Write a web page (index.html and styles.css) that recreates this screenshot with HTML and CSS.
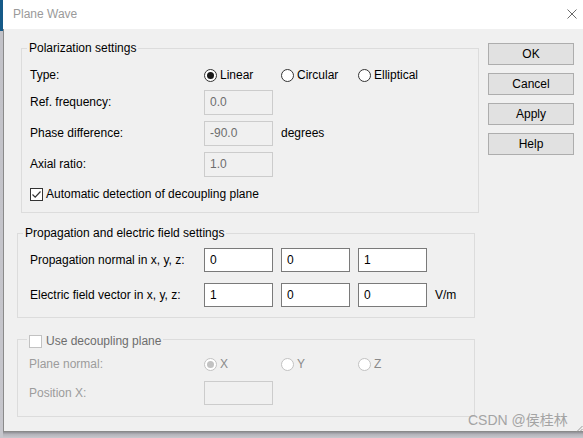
FILE: index.html
```html
<!DOCTYPE html>
<html>
<head>
<meta charset="utf-8">
<link rel="stylesheet" href="styles.css">
</head>
<body>
<div class="screen">
  <div class="desk-edge"></div>
  <div class="window">
    <div class="titlebar">
      <span class="title">Plane Wave</span>
      <svg class="close" width="10" height="10" viewBox="0 0 10 10"><path d="M0.5 0.5 L9.5 9.5 M9.5 0.5 L0.5 9.5" stroke="#6a6a6a" stroke-width="1" fill="none"/></svg>
    </div>
    <div class="client">
      <div class="groups">
        <section class="group g1">
          <div class="legend">Polarization settings</div>
          <div class="row r-type">
            <span class="label">Type:</span>
            <span class="radio"><span class="circle on"></span>Linear</span>
            <span class="radio"><span class="circle"></span>Circular</span>
            <span class="radio"><span class="circle"></span>Elliptical</span>
          </div>
          <div class="row r-ref">
            <span class="label">Ref. frequency:</span>
            <input class="field field-off" type="text" value="0.0" disabled>
          </div>
          <div class="row r-phase">
            <span class="label">Phase difference:</span>
            <input class="field field-off" type="text" value="-90.0" disabled>
            <span class="unit">degrees</span>
          </div>
          <div class="row r-axial">
            <span class="label">Axial ratio:</span>
            <input class="field field-off" type="text" value="1.0" disabled>
          </div>
          <div class="check-row">
            <span class="box"><svg width="11" height="11" viewBox="0 0 11 11"><path d="M1.5 5.5 L4.2 8.2 L9.5 2.5" stroke="#333" stroke-width="1.2" fill="none"/></svg></span>
            <span>Automatic detection of decoupling plane</span>
          </div>
        </section>

        <section class="group g2">
          <div class="legend">Propagation and electric field settings</div>
          <div class="row r-prop">
            <span class="label">Propagation normal in x, y, z:</span>
            <input class="field" type="text" value="0">
            <input class="field" type="text" value="0">
            <input class="field" type="text" value="1">
          </div>
          <div class="row r-efield">
            <span class="label">Electric field vector in x, y, z:</span>
            <input class="field" type="text" value="1">
            <input class="field" type="text" value="0">
            <input class="field" type="text" value="0">
            <span class="unit">V/m</span>
          </div>
        </section>

        <section class="group g3">
          <div class="legend legend-check">
            <span class="box box-off"></span>
            <span>Use decoupling plane</span>
          </div>
          <div class="row r-normal">
            <span class="label label-off">Plane normal:</span>
            <span class="radio radio-off"><span class="circle on"></span>X</span>
            <span class="radio radio-off"><span class="circle"></span>Y</span>
            <span class="radio radio-off"><span class="circle"></span>Z</span>
          </div>
          <div class="row r-pos">
            <span class="label label-off">Position X:</span>
            <input class="field field-off" type="text" value="" disabled>
          </div>
        </section>
      </div>

      <div class="buttons">
        <button class="btn">OK</button>
        <button class="btn">Cancel</button>
        <button class="btn">Apply</button>
        <button class="btn">Help</button>
      </div>
    </div>
  </div>
  <div class="bottom-edge"></div>
  <div class="watermark">CSDN @侯桂林</div>
  <svg class="grip" width="7" height="7" viewBox="0 0 7 7"><path d="M6.5 1 L1 6.5 M6.5 4 L4 6.5" stroke="#9a9a9a" stroke-width="1" fill="none"/></svg>
</div>
</body>
</html>
```

FILE: styles.css
```css
* { box-sizing: border-box; }

html, body {
  margin: 0;
  padding: 0;
  width: 583px;
  height: 438px;
  overflow: hidden;
  background: #c4c4ca;
  font-family: "Liberation Sans", Arial, "Noto Sans CJK SC", sans-serif;
  font-size: 12px;
  line-height: 15px;
  color: #000;
}

.screen {
  position: relative;
  display: grid;
  grid-template-columns: 3px 580px;
  grid-template-rows: 432px 6px;
  width: 583px;
  height: 438px;
}

.desk-edge {
  grid-row: 1 / 3;
  grid-column: 1;
  background: linear-gradient(#155a88 0, #155a88 31px, #c2c2c8 31px, #c6c6cc 100%);
}

.window {
  grid-row: 1;
  grid-column: 2;
  display: flex;
  flex-direction: column;
  background: #f0f0f0;
}

.bottom-edge {
  grid-row: 2;
  grid-column: 2;
  background: linear-gradient(#8e8e94, #b4b4ba 40%, #c8c8ce);
}

.titlebar {
  height: 29px;
  flex: 0 0 29px;
  background: #fff;
  display: flex;
  align-items: center;
  justify-content: space-between;
  padding: 0 6px 0 10px;
}

.title {
  color: #9a9a9a;
  font-size: 12px;
}

.close { display: block; margin-top: -1px; }

.client {
  flex: 1;
  display: flex;
  gap: 9px;
  padding-left: 13px;
  border-left: 1px solid #8a8a8a;
  border-bottom: 1px solid #8a8a8a;
}

.groups {
  width: 462px;
  padding-top: 19px;
}

.group {
  width: 458px;
  border: 1px solid #dcdcdc;
}

.g1 { margin-left: 4px; padding-bottom: 6px; }
.g2 { margin-top: 20px; padding-bottom: 10px; }
.g3 { margin-top: 21px; padding-bottom: 11px; }

.legend {
  display: flex;
  align-items: center;
  width: max-content;
  height: 15px;
  margin-top: -8px;
  margin-left: 5px;
  padding: 0 2px;
  background: #f0f0f0;
}

.legend-check {
  margin-top: -6px;
  margin-left: 9px;
  gap: 4px;
  color: #6d6d6d;
}

.row {
  display: grid;
  grid-template-columns: 166px 69px 69px 69px auto;
  column-gap: 8px;
  align-items: center;
}

.g1 .row { padding-left: 8px; }
.g2 .row { padding-left: 12px; }
.g3 .row { padding-left: 11px; grid-template-columns: 167px 69px 69px 69px auto; }

.r-type { margin-top: 7px; height: 24px; }
.r-ref { margin-top: 3px; height: 25px; }
.r-phase { margin-top: 6px; height: 25px; }
.r-axial { margin-top: 6px; height: 25px; }

.r-prop { margin-top: 7px; height: 24px; }
.r-efield { margin-top: 11px; height: 24px; }

.r-normal { margin-top: 3px; height: 24px; }
.r-pos { margin-top: 5px; height: 24px; }

.label { white-space: nowrap; }
.label-off { color: #9c9c9c; }

.unit { white-space: nowrap; }

.field {
  display: block;
  width: 69px;
  height: 24px;
  margin: 0;
  padding: 0 0 1px 5px;
  border: 1px solid #7a7a7a;
  border-radius: 0;
  background: #fff;
  font-family: inherit;
  font-size: 12px;
  color: #000;
  outline: none;
}

.g1 .field { height: 25px; }

.field-off {
  border-color: #cccccc;
  background: #f0f0f0;
  color: #6d6d6d;
  -webkit-text-fill-color: #6d6d6d;
}

.radio {
  display: flex;
  align-items: center;
  gap: 3px;
  white-space: nowrap;
}

.circle {
  width: 13px;
  height: 13px;
  flex: 0 0 13px;
  border: 1px solid #333;
  border-radius: 50%;
  background: #fff;
  display: flex;
  align-items: center;
  justify-content: center;
}

.circle.on::after {
  content: "";
  width: 7px;
  height: 7px;
  border-radius: 50%;
  background: #1a1a1a;
}

.radio-off { color: #8a8a8a; }
.radio-off .circle { border-color: #c2c2c2; }
.radio-off .circle.on::after { background: #c2c2c2; }

.check-row {
  display: flex;
  align-items: center;
  gap: 3px;
  height: 24px;
  margin-top: 5px;
  padding-left: 8px;
}

.box {
  width: 13px;
  height: 13px;
  flex: 0 0 13px;
  border: 1px solid #333;
  background: #fff;
  display: flex;
  align-items: center;
  justify-content: center;
}

.box svg { display: block; }

.box-off { border-color: #c2c2c2; }

.buttons {
  display: flex;
  flex-direction: column;
  gap: 8px;
  padding-top: 14px;
}

.btn {
  width: 86px;
  height: 22px;
  margin: 0;
  padding: 0;
  border: 1px solid #adadad;
  border-radius: 0;
  background: #e1e1e1;
  font-family: inherit;
  font-size: 12px;
  color: #000;
}

.watermark {
  position: absolute;
  left: 468px;
  top: 412px;
  font-size: 14px;
  line-height: 16px;
  color: #a4a4a4;
  white-space: nowrap;
  font-family: "Liberation Sans", Arial, "Noto Sans CJK SC", sans-serif;
}

.grip {
  position: absolute;
  left: 576px;
  top: 425px;
}
```
